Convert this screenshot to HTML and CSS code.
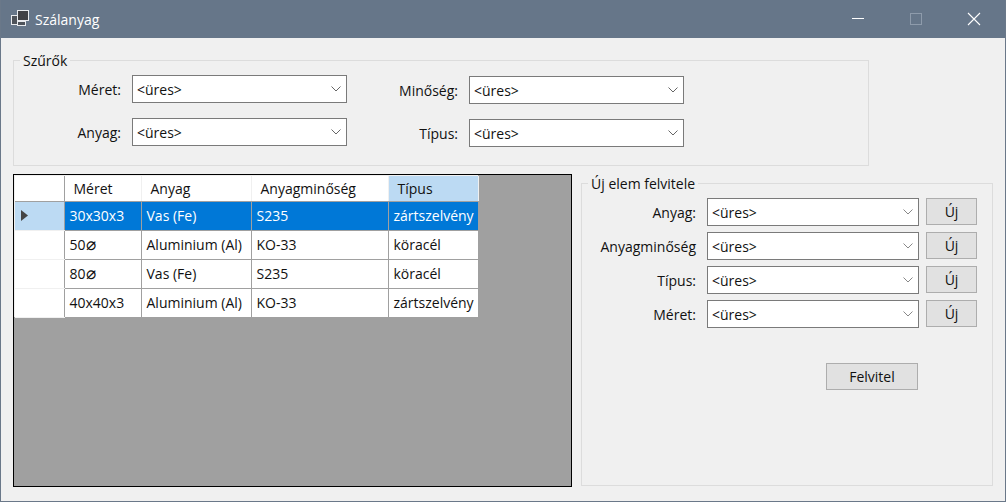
FILE: index.html
```html
<!DOCTYPE html>
<html lang="hu">
  <head>
    <meta charset="UTF-8" />
    <title>Szálanyag</title>
    <link rel="stylesheet" href="styles.css">
  </head>
  <body>
    <div class="window">
      <div class="titlebar">
        <svg class="app-icon" width="20" height="20" viewBox="0 0 20 20">
          <rect x="1.500" y="6.500" width="8" height="9" fill="#4e535a" stroke="#e8eaed" />
          <rect x="7.500" y="1.500" width="11" height="10" fill="#3f4044" stroke="#e8eaed" />
          <rect x="7.500" y="12.500" width="8" height="4" fill="#4e535a" stroke="#e8eaed" />
        </svg>
        <span class="title">Szálanyag</span>
        <div class="caption-buttons">
          <svg width="46" height="38" viewBox="0 0 46 38"><path d="M16 18.500H28" stroke="#fff" /></svg>
          <svg width="46" height="38" viewBox="0 0 46 38"><rect x="16.500" y="13.500" width="11" height="11" fill="none" stroke="#8e9bab" /></svg>
          <svg width="46" height="38" viewBox="0 0 46 38"><path d="M16 13L28 25M28 13L16 25" stroke="#fff" stroke-width="1.1" /></svg>
        </div>
      </div>

      <div class="content">
        <!-- Szűrők -->
        <fieldset class="group filters">
          <legend>Szűrők</legend>
          <div class="filter-grid">
            <label>Méret:</label>
            <div class="combo"><span>&lt;üres&gt;</span><svg width="10" height="6" viewBox="0 0 10 6"><path d="M.5 .5L5 5L9.500 .5" fill="none" stroke="#666" /></svg></div>
            <label class="shifted">Minőség:</label>
            <div class="combo shifted"><span>&lt;üres&gt;</span><svg width="10" height="6" viewBox="0 0 10 6"><path d="M.5 .5L5 5L9.500 .5" fill="none" stroke="#666" /></svg></div>
            <label>Anyag:</label>
            <div class="combo"><span>&lt;üres&gt;</span><svg width="10" height="6" viewBox="0 0 10 6"><path d="M.5 .5L5 5L9.500 .5" fill="none" stroke="#666" /></svg></div>
            <label class="shifted">Típus:</label>
            <div class="combo shifted"><span>&lt;üres&gt;</span><svg width="10" height="6" viewBox="0 0 10 6"><path d="M.5 .5L5 5L9.500 .5" fill="none" stroke="#666" /></svg></div>
          </div>
        </fieldset>

        <div class="lower">
          <!-- Adatok -->
          <div class="grid-view">
            <table>
              <thead>
                <tr>
                  <th class="row-head"></th>
                  <th class="c1">Méret</th>
                  <th class="c2">Anyag</th>
                  <th class="c3">Anyagminőség</th>
                  <th class="c4 sel-head">Típus</th>
                </tr>
              </thead>
              <tbody>
                <tr class="selected">
                  <td class="row-head"><svg class="row-arrow" width="7" height="11" viewBox="0 0 7 11"><path d="M0 0L7 5.500L0 11Z" fill="#444" /></svg></td>
                  <td>30x30x3</td><td>Vas (Fe)</td><td>S235</td><td>zártszelvény</td>
                </tr>
                <tr>
                  <td class="row-head"></td>
                  <td>50<span class="dia">⌀</span></td><td>Aluminium (Al)</td><td>KO-33</td><td>köracél</td>
                </tr>
                <tr>
                  <td class="row-head"></td>
                  <td>80<span class="dia">⌀</span></td><td>Vas (Fe)</td><td>S235</td><td>köracél</td>
                </tr>
                <tr>
                  <td class="row-head"></td>
                  <td>40x40x3</td><td>Aluminium (Al)</td><td>KO-33</td><td>zártszelvény</td>
                </tr>
              </tbody>
            </table>
          </div>

          <!-- Új elem -->
          <fieldset class="group new-item">
            <legend>Új elem felvitele</legend>
            <div class="new-grid">
              <label>Anyag:</label>
              <div class="combo"><span>&lt;üres&gt;</span><svg width="10" height="6" viewBox="0 0 10 6"><path d="M.5 .5L5 5L9.500 .5" fill="none" stroke="#888" /></svg></div>
              <button>Új</button>
              <label>Anyagminőség</label>
              <div class="combo"><span>&lt;üres&gt;</span><svg width="10" height="6" viewBox="0 0 10 6"><path d="M.5 .5L5 5L9.500 .5" fill="none" stroke="#888" /></svg></div>
              <button>Új</button>
              <label>Típus:</label>
              <div class="combo"><span>&lt;üres&gt;</span><svg width="10" height="6" viewBox="0 0 10 6"><path d="M.5 .5L5 5L9.500 .5" fill="none" stroke="#888" /></svg></div>
              <button>Új</button>
              <label>Méret:</label>
              <div class="combo"><span>&lt;üres&gt;</span><svg width="10" height="6" viewBox="0 0 10 6"><path d="M.5 .5L5 5L9.500 .5" fill="none" stroke="#888" /></svg></div>
              <button>Új</button>
            </div>
            <button class="submit">Felvitel</button>
          </fieldset>
        </div>
      </div>
    </div>
  </body>
</html>
```

FILE: styles.css
```css
body {
  margin: 0;
  font-family: "Open Sans", "Noto Sans", sans-serif;
  font-size: 14px;
  color: #111;
  background-color: #f0f0f0;
}
.window {
  width: 1006px;
  height: 502px;
  box-sizing: border-box;
  border: 1px solid #6a7889;
  border-top: 0;
  background: #f0f0f0;
  overflow: hidden;
}
.titlebar {
  display: flex;
  align-items: center;
  height: 38px;
  margin: 0 -1px;
  padding-left: 10px;
  background-color: #667689;
  color: #fff;
}
.app-icon {
  margin-right: 5px;
}
.title {
  font-size: 14px;
}
.caption-buttons {
  display: flex;
  margin-left: auto;
  margin-right: 8px;
  gap: 12px;
}
.content {
  padding: 13px 12px 0 12px;
}
.group {
  margin: 0;
  padding: 0;
  border: 1px solid #dcdcdc;
  box-sizing: border-box;
}
.group legend {
  margin-left: 6px;
  padding: 0 3px;
  line-height: 19px;
}
.filters {
  width: 856px;
  height: 115px;
}
.filter-grid {
  display: grid;
  grid-template-columns: 107px 215px 100px 215px;
  grid-auto-rows: 28px;
  column-gap: 11px;
  row-gap: 15px;
  padding-top: 5px;
}
.shifted {
  margin-top: 1px;
  margin-bottom: -1px;
}
.filter-grid label,
.new-grid label {
  align-self: center;
  text-align: right;
}
.combo {
  display: flex;
  align-items: center;
  justify-content: space-between;
  box-sizing: border-box;
  height: 28px;
  padding: 0 5px 0 4px;
  background: #fff;
  border: 1px solid #7a7a7a;
}
.lower {
  display: flex;
  align-items: flex-start;
  margin-top: 8px;
}
.grid-view {
  width: 559px;
  height: 313px;
  box-sizing: border-box;
  padding: 1px 0 0 1px;
  border: 1px solid #000;
  background: #a0a0a0;
}
table {
  border-collapse: collapse;
  table-layout: fixed;
  background: #fff;
  box-shadow: -1px -1px 0 #f0f0f0;
}
th {
  height: 25px;
  padding: 0 0 0 9px;
  box-sizing: border-box;
  text-align: left;
  font-weight: normal;
  border-right: 1px solid #f0f0f0;
  border-bottom: 1px solid #a0a0a0;
}
td {
  height: 29px;
  padding: 0 0 0 5px;
  box-sizing: border-box;
  border-right: 1px solid #a0a0a0;
  border-bottom: 1px solid #a0a0a0;
  white-space: nowrap;
  overflow: hidden;
}
.row-head {
  width: 49px;
  padding: 0 0 0 6px;
  border-right: 1px solid #a0a0a0;
  border-bottom-color: #f0f0f0;
}
th.row-head {
  border-bottom-color: #a0a0a0;
}
.row-arrow {
  display: block;
}
.dia {
  font-family: "DejaVu Sans", sans-serif;
  font-size: 17px;
  font-weight: 200;
  line-height: 0;
}
.c1 { width: 77px; }
.c2 { width: 110px; }
.c3 { width: 137px; }
.c4 { width: 90px; }
.sel-head {
  background: #bcdaf3;
}
.selected td {
  background: #0078d7;
  color: #fff;
}
.selected td.row-head {
  background: #bcdaf3;
}
.new-item {
  width: 412px;
  height: 312px;
  margin-left: 9px;
}
.new-grid {
  display: grid;
  grid-template-columns: 114px 212px 51px;
  grid-auto-rows: 28px;
  column-gap: 0;
  row-gap: 6px;
  padding-top: 5px;
}
.new-grid .combo {
  margin-left: 11px;
  width: 212px;
}
.new-grid button {
  margin-left: 18px;
}
button {
  height: 27px;
  width: 51px;
  padding: 0;
  font: inherit;
  color: inherit;
  background: #e1e1e1;
  border: 1px solid #adadad;
}
.submit {
  display: block;
  width: 92px;
  margin: 35px 0 0 244px;
}
```
